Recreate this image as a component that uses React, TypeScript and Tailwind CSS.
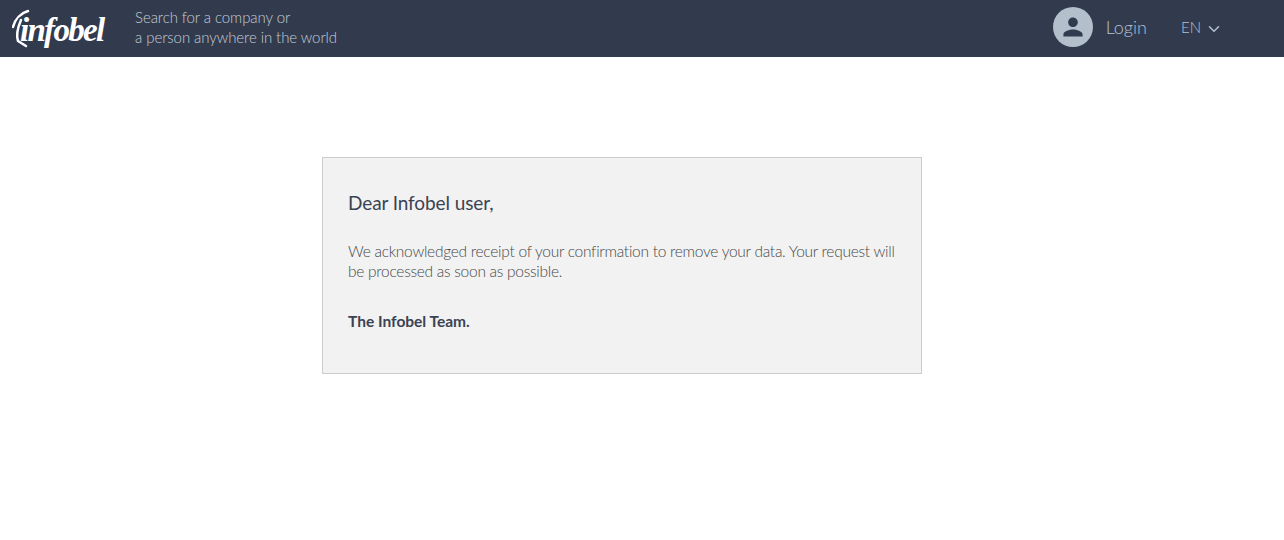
import { ChevronDown } from "lucide-react";

const font = "font-['Lato','Noto_Sans',sans-serif]";

function Logo() {
  return (
    <div className="relative w-[92px] h-[44px] shrink-0">
      <span className="absolute left-[8px] top-[1px] font-['Liberation_Serif',serif] italic font-bold text-[33px] leading-[44px] tracking-[-1.7px] text-white">
        infobel
      </span>
      <svg width="30" height="44" viewBox="0 0 30 44" className="absolute left-0 top-0" fill="none" stroke="#fff" strokeLinecap="round">
        <path d="M1 20 C3 12 9 6 16 4" strokeWidth="2.5" />
        <path d="M9 13 C6 20 4 28 6 34 L14 39" strokeWidth="2.5" />
      </svg>
    </div>
  );
}

export default function App() {
  return (
    <div className={`min-h-screen bg-white ${font}`}>
      <header className="h-[57px] bg-[#323b4e] flex items-center pl-[12px] pr-[61px]">
        <Logo />
        <p className="ml-[31px] text-[15px] leading-[20px] font-light tracking-[-0.07px] text-[#c3ccd6] mt-[-3px]">
          Search for a company or
          <br />
          a person anywhere in the world
        </p>
        <div className="ml-auto flex items-center mt-[-3px]">
          <div className="w-[40px] h-[40px] rounded-full bg-[#b3bfcb] flex items-center justify-center">
            <svg width="24" height="24" viewBox="0 0 24 24" fill="#323b4e">
              <path d="M12 12c2.700 0 4.800-2.200 4.800-4.800S14.700 2.400 12 2.400 7.200 4.500 7.200 7.200 9.300 12 12 12zm0 2.400c-3.200 0-9.600 1.600-9.600 4.800v2.400h19.200v-2.400c0-3.200-6.400-4.800-9.600-4.800z" />
            </svg>
          </div>
          <span className="ml-[13px] text-[18px] font-light text-[#b4c1d4]">Login</span>
          <span className="ml-[34px] text-[15px] font-light text-[#b4c1d4]">EN</span>
          <ChevronDown className="ml-[4px] mt-[3px] text-[#b3bfcb]" size={18} strokeWidth={2} />
        </div>
      </header>
      <main className="pt-[100px] pl-[322px]">
        <div className="w-[600px] h-[217px] bg-[#f2f2f2] border border-[#cccccc] px-[25px] pt-[32px]">
          <h1 className="text-[19px] leading-[26px] font-normal tracking-[-0.1px] text-[#3a4354]">Dear Infobel user,</h1>
          <p className="mt-[25px] text-[15.5px] leading-[20px] font-light tracking-[-0.27px] text-[#484848]">
            We acknowledged receipt of your confirmation to remove your data. Your request will be processed as soon as possible.
          </p>
          <p className="mt-[30px] text-[15.5px] leading-[20px] font-bold text-[#3a4354]">The Infobel Team.</p>
        </div>
      </main>
    </div>
  );
}
